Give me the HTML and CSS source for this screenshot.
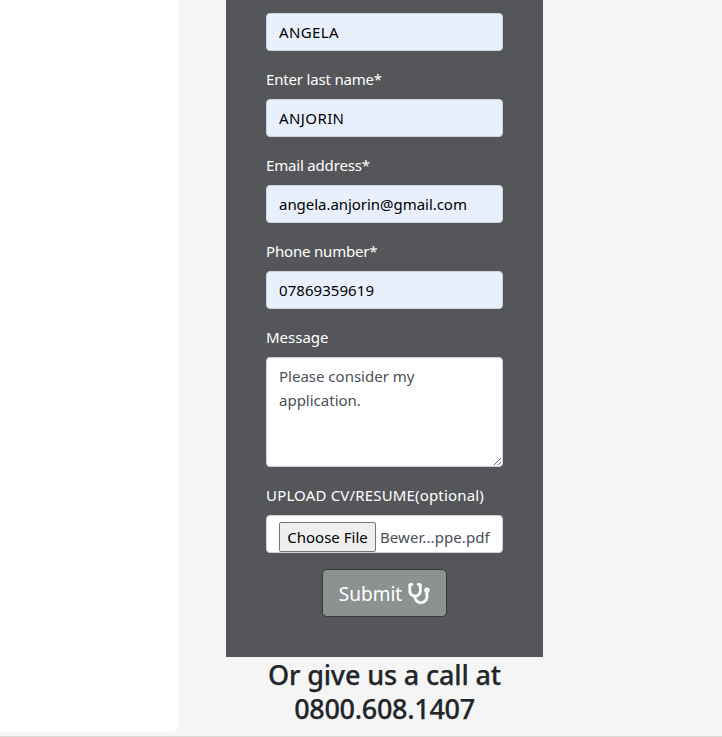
FILE: index.html
```
<!DOCTYPE html>
<html lang="en">
<head>
<meta charset="utf-8">
<title>Application form</title>
<link rel="stylesheet" href="styles.css">
</head>
<body>
<main class="page">
  <section class="content-panel"></section>
  <aside class="sidebar">
    <form class="application">
      <div class="field"><input class="control filled caps" aria-label="First name" value="ANGELA"></div>
      <div class="field"><label class="label tight" for="last">Enter last name*</label><input id="last" class="control filled caps" value="ANJORIN"></div>
      <div class="field"><label class="label tight" for="email">Email address*</label><input id="email" class="control filled" value="angela.anjorin@gmail.com"></div>
      <div class="field"><label class="label tight" for="phone">Phone number*</label><input id="phone" class="control filled digits" value="07869359619"></div>
      <div class="field"><label class="label" for="message">Message</label><textarea id="message" class="control message">Please consider my application.</textarea></div>
      <div class="field"><div class="label upload">UPLOAD CV/RESUME(optional)</div>
        <div class="control file"><button type="button" class="choose">Choose File</button><span class="filename">Bewer...ppe.pdf</span></div>
      </div>
      <button type="button" class="submit"><span>Submit</span><svg class="icon" viewBox="0 0 512 512"><path fill="currentColor" stroke="currentColor" stroke-width="5" d="M447.1 112c-34.2.5-62.3 28.4-63 62.6-.5 24.3 12.5 45.6 32 56.8V344c0 57.3-50.2 104-112 104-60 0-109.2-44.1-111.9-99.2C265 333.8 320 269.2 320 192V36.6c0-11.4-8.1-21.3-19.3-23.5L237.8.5c-13-2.6-25.6 5.8-28.2 18.8L206.4 35c-2.6 13 5.8 25.6 18.8 28.2l30.7 6.1v121.4c0 52.9-42.2 96.7-95.1 97.2-53.4.5-96.9-42.7-96.9-96V69.4l30.7-6.1c13-2.6 21.4-15.2 18.8-28.2l-3.1-15.7C107.7 6.4 95.1-2 82.1.6L19.3 13C8.1 15.3 0 25.1 0 36.6V192c0 77.3 55.1 142 128.1 156.8C130.7 439.2 208.6 512 304 512c97 0 176-75.4 176-168V231.4c19.1-11.1 32-31.7 32-55.4 0-35.7-29.2-64.5-64.9-64zm.9 80c-8.8 0-16-7.2-16-16s7.2-16 16-16 16 7.2 16 16-7.2 16-16 16z"/></svg></button>
    </form>
    <h2 class="call"><span class="call-text">Or give us a call at</span><br><span class="call-number">0800.608.1407</span></h2>
  </aside>
</main>
</body>
</html>
```
FILE: styles.css
```
* { box-sizing: border-box; }
body {
  margin: 0;
  background: #f5f5f5;
  color: #212529;
  font: 15px/24px "Segoe UI", "Noto Sans", "Open Sans", sans-serif;
  overflow: hidden;
}
.page {
  display: flex;
  height: 737px;
  border-bottom: 1px solid #d9d9d5;
}
.content-panel {
  width: 178px;
  height: 732px;
  background: #fff;
  border-radius: 0 0 8px 0;
}
.sidebar { width: 317px; margin-left: 48px; }
.application {
  height: 657px;
  padding: 13px 40px 40px;
  background: #555659;
  color: #fff;
}
.field { margin-bottom: 16px; }
.label { display: block; height: 24px; margin-bottom: 8px; white-space: nowrap; }
.tight { letter-spacing: -0.18px; }
.upload { letter-spacing: 0.17px; }
.control {
  display: block;
  width: 237px;
  height: 38px;
  margin: 0;
  padding: 6px 12px;
  border: 1px solid #ced4da;
  border-radius: 4px;
  background: #fff;
  color: #495057;
  font: inherit;
  outline: 0;
}
.filled { background: #e8f0fe; color: #000; letter-spacing: -0.04px; }
.caps { letter-spacing: 0.4px; }
.digits { letter-spacing: 0.06px; }
.message { height: 110px; resize: vertical; overflow: hidden; letter-spacing: 0; }
.file { display: flex; gap: 4px; padding-right: 0; overflow: hidden; }
.choose {
  flex: none;
  width: 97px;
  height: 30px;
  padding: 0;
  border: 1px solid #767676;
  border-radius: 2px;
  background: #efefef;
  color: #000;
  font: inherit;
  white-space: nowrap;
}
.filename { line-height: 30px; white-space: nowrap; letter-spacing: 0.08px; }
.submit {
  display: flex;
  align-items: center;
  justify-content: center;
  gap: 6px;
  width: 125px;
  height: 48px;
  margin: 0 auto;
  padding: 2px 0 0;
  border: 1px solid #343a3a;
  border-radius: 5px;
  background: #8c9191;
  color: #fff;
  font: 19px/30px "Segoe UI", "Noto Sans", sans-serif;
}
.icon { width: 22px; height: 21px; overflow: visible; margin-top: -2px; }
.call {
  margin: 1px 0 0;
  font-size: 27px;
  line-height: 34px;
  font-weight: 500;
  text-align: center;
  white-space: nowrap;
  -webkit-text-stroke: 0.25px #212529;
}
.call-text { letter-spacing: -0.15px; }
.call-number { letter-spacing: -0.3px; }
```
